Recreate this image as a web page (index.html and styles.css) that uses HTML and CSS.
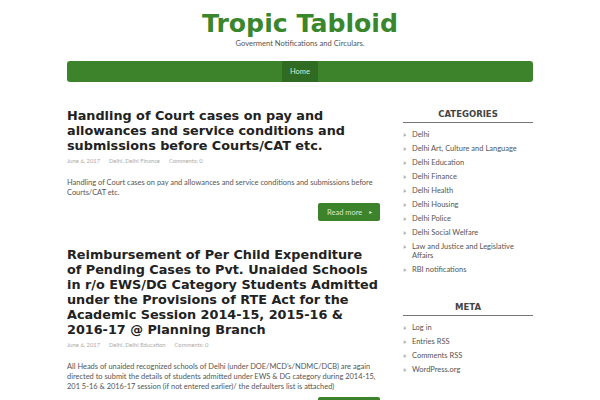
FILE: index.html
```html
<!DOCTYPE html>
<html>
<head>
<meta charset="utf-8">
<link rel="stylesheet" href="styles.css">
</head>
<body>
<header class="site-header">
  <h1 class="site-title">Tropic Tabloid</h1>
  <p class="site-desc">Goverment Notifications and Circulars.</p>
</header>
<nav class="nav">
  <a class="nav-item" href="#">Home</a>
</nav>
<div class="wrap">
  <main class="content">
    <article class="post">
      <h2 class="post-title">Handling of Court cases on pay and allowances and service conditions and submissions before Courts/CAT etc.</h2>
      <div class="meta"><span>June 6, 2017</span><span>Delhi, Delhi Finance</span><span>Comments: 0</span></div>
      <p class="excerpt">Handling of Court cases on pay and allowances and service conditions and submissions before Courts/CAT etc.</p>
      <div class="more-row"><a class="more" href="#">Read more <span class="arr">&#9658;</span></a></div>
    </article>
    <article class="post">
      <h2 class="post-title">Reimbursement of Per Child Expenditure of Pending Cases to Pvt. Unaided Schools in r/o EWS/DG Category Students Admitted under the Provisions of RTE Act for the Academic Session 2014-15, 2015-16 &amp; 2016-17 @ Planning Branch</h2>
      <div class="meta"><span>June 6, 2017</span><span>Delhi, Delhi Education</span><span>Comments: 0</span></div>
      <p class="excerpt">All Heads of unaided recognized schools of Delhi (under DOE/MCD’s/NDMC/DCB) are again directed to submit the details of students admitted under EWS &amp; DG category during 2014-15, 201 5-16 &amp; 2016-17 session (if not entered earlier)/ the defaulters list is attached)</p>
      <div class="more-row"><a class="more" href="#">Read more <span class="arr">&#9658;</span></a></div>
    </article>
  </main>
  <aside class="sidebar">
    <section class="widget">
      <h3 class="widget-title">CATEGORIES</h3>
      <ul class="list">
        <li>Delhi</li>
        <li>Delhi Art, Culture and Language</li>
        <li>Delhi Education</li>
        <li>Delhi Finance</li>
        <li>Delhi Health</li>
        <li>Delhi Housing</li>
        <li>Delhi Police</li>
        <li>Delhi Social Welfare</li>
        <li>Law and Justice and Legislative Affairs</li>
        <li>RBI notifications</li>
      </ul>
    </section>
    <section class="widget">
      <h3 class="widget-title">META</h3>
      <ul class="list">
        <li>Log in</li>
        <li>Entries RSS</li>
        <li>Comments RSS</li>
        <li>WordPress.org</li>
      </ul>
    </section>
  </aside>
</div>
</body>
</html>
```
FILE: styles.css
```css
body {
  margin: 0;
  background: #fff;
  font-family: "Lato", "Open Sans", "Liberation Sans", sans-serif;
  color: #555;
  overflow: hidden;
}
.site-header {
  text-align: center;
  padding-top: 10px;
  height: 53px;
  box-sizing: border-box;
}
.site-title {
  margin: 0;
  font-family: "DejaVu Sans", sans-serif;
  font-weight: bold;
  font-size: 25.2px;
  line-height: 28px;
  color: #3a862c;
}
.site-desc {
  margin: 0;
  font-size: 7.6px;
  line-height: 10px;
  color: #555;
}
.nav {
  width: 466px;
  height: 21px;
  margin: 8px auto 0;
  background: #3c832c;
  border-radius: 3px;
  display: flex;
  justify-content: center;
}
.nav-item {
  display: block;
  width: 36px;
  line-height: 21px;
  text-align: center;
  background: #2f6b23;
  color: #d6e8d0;
  font-size: 7.5px;
  text-decoration: none;
}
.wrap {
  width: 466px;
  margin: 26px auto 0;
  display: flex;
  gap: 23px;
}
.content {
  width: 313px;
  flex: none;
}
.sidebar {
  width: 130px;
  flex: none;
}
.post {
  margin-bottom: 26px;
}
.post-title {
  margin: 0;
  font-family: "DejaVu Sans", sans-serif;
  font-weight: bold;
  font-size: 12.8px;
  line-height: 15px;
  color: #222;
}
.meta {
  margin-top: 4px;
  font-size: 5.8px;
  color: #aaa;
  display: flex;
  gap: 9px;
}
.excerpt {
  margin: 14px 0 0;
  font-size: 7.45px;
  line-height: 10px;
  color: #555;
}
.more-row {
  display: flex;
  justify-content: flex-end;
  margin-top: 5px;
}
.more {
  display: block;
  width: 62px;
  height: 18px;
  line-height: 18px;
  box-sizing: border-box;
  padding-left: 9px;
  background: #3c832c;
  border-radius: 2px;
  color: #d6e8d0;
  font-size: 7.5px;
  text-decoration: none;
}
.arr {
  font-size: 5px;
  margin-left: 4px;
  vertical-align: 1px;
}
.widget {
  margin-bottom: 25px;
}
.widget-title {
  margin: 0;
  text-align: center;
  font-family: "DejaVu Sans", sans-serif;
  font-weight: bold;
  font-size: 8.5px;
  line-height: 12px;
  color: #444;
  padding-bottom: 2px;
  border-bottom: 1.5px solid #777;
}
.list {
  list-style: none;
  margin: 4px 0 0;
  padding: 0 0 0 9px;
}
.list li {
  position: relative;
  font-size: 7.5px;
  line-height: 9px;
  padding: 2.5px 0;
  color: #555;
}
.list li::before {
  content: "»";
  position: absolute;
  left: -9px;
  color: #777;
}
```
